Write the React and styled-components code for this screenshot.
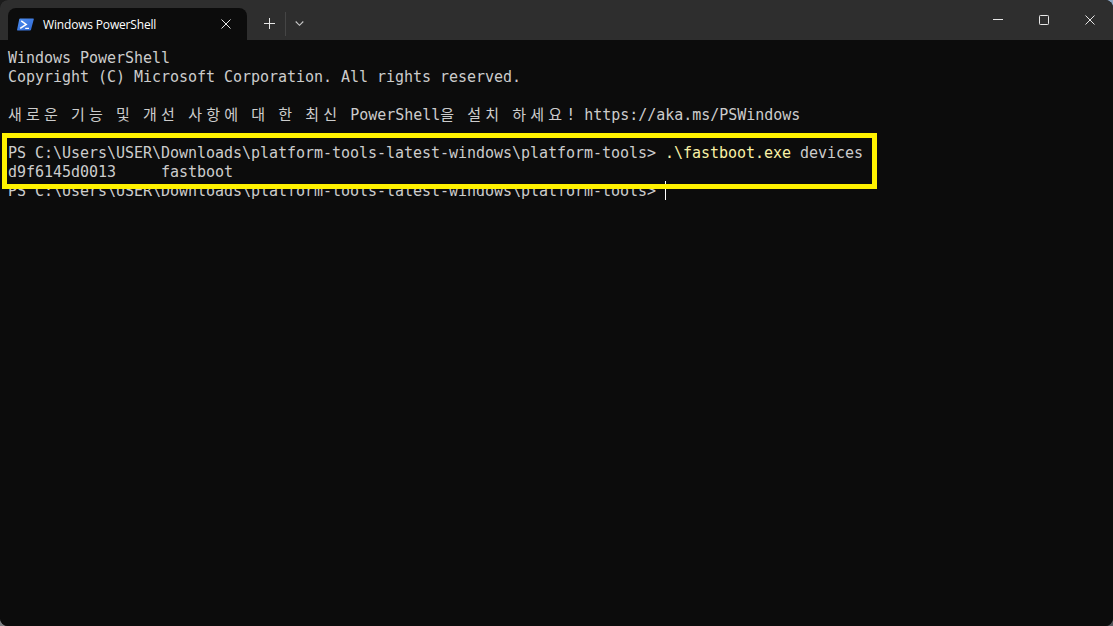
import React from "react";
import styled, { createGlobalStyle } from "styled-components";

const Global = createGlobalStyle`
  html, body { margin: 0; padding: 0; height: 100%; overflow: hidden; }
  body {
    background: conic-gradient(#8fa8c4 0 25%, #55585c 25% 50%, #7d7f82 50% 75%, #1c1c1c 75% 100%);
  }
  #root { height: 100%; }
`;

const Window = styled.div`
  height: 100vh;
  display: flex;
  flex-direction: column;
  border-radius: 8px;
  overflow: hidden;
  background: #0c0c0c;
`;

const TitleBar = styled.header`
  flex: 0 0 40px;
  display: flex;
  align-items: flex-end;
  padding-left: 8px;
  background: #2e2e2e;
`;

const Tab = styled.div`
  width: 239px;
  height: 32px;
  box-sizing: border-box;
  padding: 0 12px 0 9px;
  display: flex;
  align-items: center;
  background: #0c0c0c;
  border-radius: 8px 8px 0 0;
  color: #fff;
`;

const TabTitle = styled.span`
  flex: 1;
  margin: 1px 0 0 9px;
  font: 12px/16px "Open Sans", sans-serif;
  letter-spacing: -0.17px;
  white-space: nowrap;
`;

const IconSlot = styled.span`
  display: flex;
  align-items: center;
  justify-content: center;
  width: ${(p) => p.$w}px;
  height: ${(p) => p.$h || 32}px;
  flex: none;
  color: ${(p) => p.$color || "#e6e6e6"};
`;

const TabActions = styled.div`
  display: flex;
  align-items: center;
  height: 40px;
  padding: 7px 0 0 6px;
  box-sizing: border-box;
`;

const Divider = styled.span`
  width: 1px;
  height: 24px;
  background: #454545;
`;

const Spacer = styled.div`
  flex: 1;
`;

const WindowControls = styled.div`
  display: flex;
  align-self: stretch;
`;

const Terminal = styled.main`
  position: relative;
  flex: 1;
  padding: 9px 0 0 8px;
  background: #0c0c0c;
  color: #cccccc;
  font: 15px/19px "DejaVu Sans Mono", "Liberation Mono", monospace;
`;

const Line = styled.div`
  height: 19px;
  line-height: 19px;
  white-space: pre;
  display: flex;
`;

const Run = styled.span`
  white-space: pre;
  color: ${(p) => p.$color || "inherit"};
  letter-spacing: -0.03px;
`;

const Hangul = styled.span`
  font-family: "Noto Sans CJK KR", sans-serif;
  font-size: 15px;
  line-height: 19px;
  letter-spacing: 4.2px;
  white-space: pre;
  margin-top: -2px;
`;

const Cursor = styled.span`
  width: 1px;
  height: 19px;
  margin-top: -1px;
  background: #ffffff;
`;

const Highlight = styled.div`
  position: absolute;
  left: 2px;
  top: 93px;
  width: 875px;
  height: 56px;
  box-sizing: border-box;
  border: 5px solid #fff200;
  pointer-events: none;
`;

const PowerShellIcon = () => (
  <svg width="17" height="13" viewBox="0 0 17 13">
    <defs>
      <linearGradient id="ps" x1="0" y1="0" x2="1" y2="1">
        <stop offset="0" stopColor="#4f8ff0" />
        <stop offset="1" stopColor="#2f68d4" />
      </linearGradient>
    </defs>
    <path d="M3.2 0.5 H16.2 a0.6 0.6 0 0 1 0.6 0.8 L14 11.8 a1 1 0 0 1 -1 0.7 H0.7 a0.6 0.6 0 0 1 -0.6 -0.8 L2.2 1.2 a1 1 0 0 1 1 -0.7 Z" fill="url(#ps)" />
    <path d="M4.2 2.8 L9.2 6.4 L3.2 10.4" fill="none" stroke="#fff" strokeWidth="1.5" />
    <path d="M8.2 10.4 H12" fill="none" stroke="#fff" strokeWidth="1.3" />
  </svg>
);

const Glyph = ({ size, children, sw = 1 }) => (
  <svg width={size} height={size} viewBox={`0 0 ${size} ${size}`} fill="none" stroke="currentColor" strokeWidth={sw}>
    {children}
  </svg>
);

const H = ({ children }) => <Hangul>{children}</Hangul>;

export default function App() {
  return (
    <>
      <Global />
      <Window>
        <TitleBar>
          <Tab>
            <PowerShellIcon />
            <TabTitle>Windows PowerShell</TabTitle>
            <IconSlot $w={18}>
              <Glyph size={10}><path d="M0.5 0.5 L9.5 9.5 M9.5 0.5 L0.5 9.5" /></Glyph>
            </IconSlot>
          </Tab>
          <TabActions>
            <IconSlot $w={32} $h={32}>
              <Glyph size={11}><path d="M5.5 0 V11 M0 5.5 H11" /></Glyph>
            </IconSlot>
            <Divider />
            <IconSlot $w={26} $h={32} $color="#c8c8c8">
              <Glyph size={9} sw={1.1}><path d="M0.7 2.5 L4.5 6.3 L8.3 2.5" /></Glyph>
            </IconSlot>
          </TabActions>
          <Spacer />
          <WindowControls>
            <IconSlot $w={46} $h={40}>
              <Glyph size={10}><path d="M0 4.5 H10" /></Glyph>
            </IconSlot>
            <IconSlot $w={46} $h={40}>
              <Glyph size={10}><rect x="0.5" y="0.5" width="9" height="9" rx="0.8" /></Glyph>
            </IconSlot>
            <IconSlot $w={46} $h={40}>
              <Glyph size={10}><path d="M0.5 0.5 L9.5 9.5 M9.5 0.5 L0.5 9.5" /></Glyph>
            </IconSlot>
          </WindowControls>
        </TitleBar>
        <Terminal>
          <Line><Run>Windows PowerShell</Run></Line>
          <Line><Run>Copyright (C) Microsoft Corporation. All rights reserved.</Run></Line>
          <Line />
          <Line>
            <H>새로운</H><Run> </Run><H>기능</H><Run> </Run><H>및</H><Run> </Run><H>개선</H><Run> </Run><H>사항에</H><Run> </Run><H>대</H><Run> </Run><H>한</H><Run> </Run><H>최신</H><Run> PowerShell</Run><H>을</H><Run> </Run><H>설치</H><Run> </Run><H>하세요</H><Run>! https://aka.ms/PSWindows</Run>
          </Line>
          <Line />
          <Line>
            <Run>{"PS C:\\Users\\USER\\Downloads\\platform-tools-latest-windows\\platform-tools> "}</Run>
            <Run $color="#f9f1a5">{".\\fastboot.exe"}</Run>
            <Run> devices</Run>
          </Line>
          <Line><Run>d9f6145d0013     fastboot</Run></Line>
          <Line>
            <Run>{"PS C:\\Users\\USER\\Downloads\\platform-tools-latest-windows\\platform-tools> "}</Run>
            <Cursor />
          </Line>
          <Highlight />
        </Terminal>
      </Window>
    </>
  );
}
